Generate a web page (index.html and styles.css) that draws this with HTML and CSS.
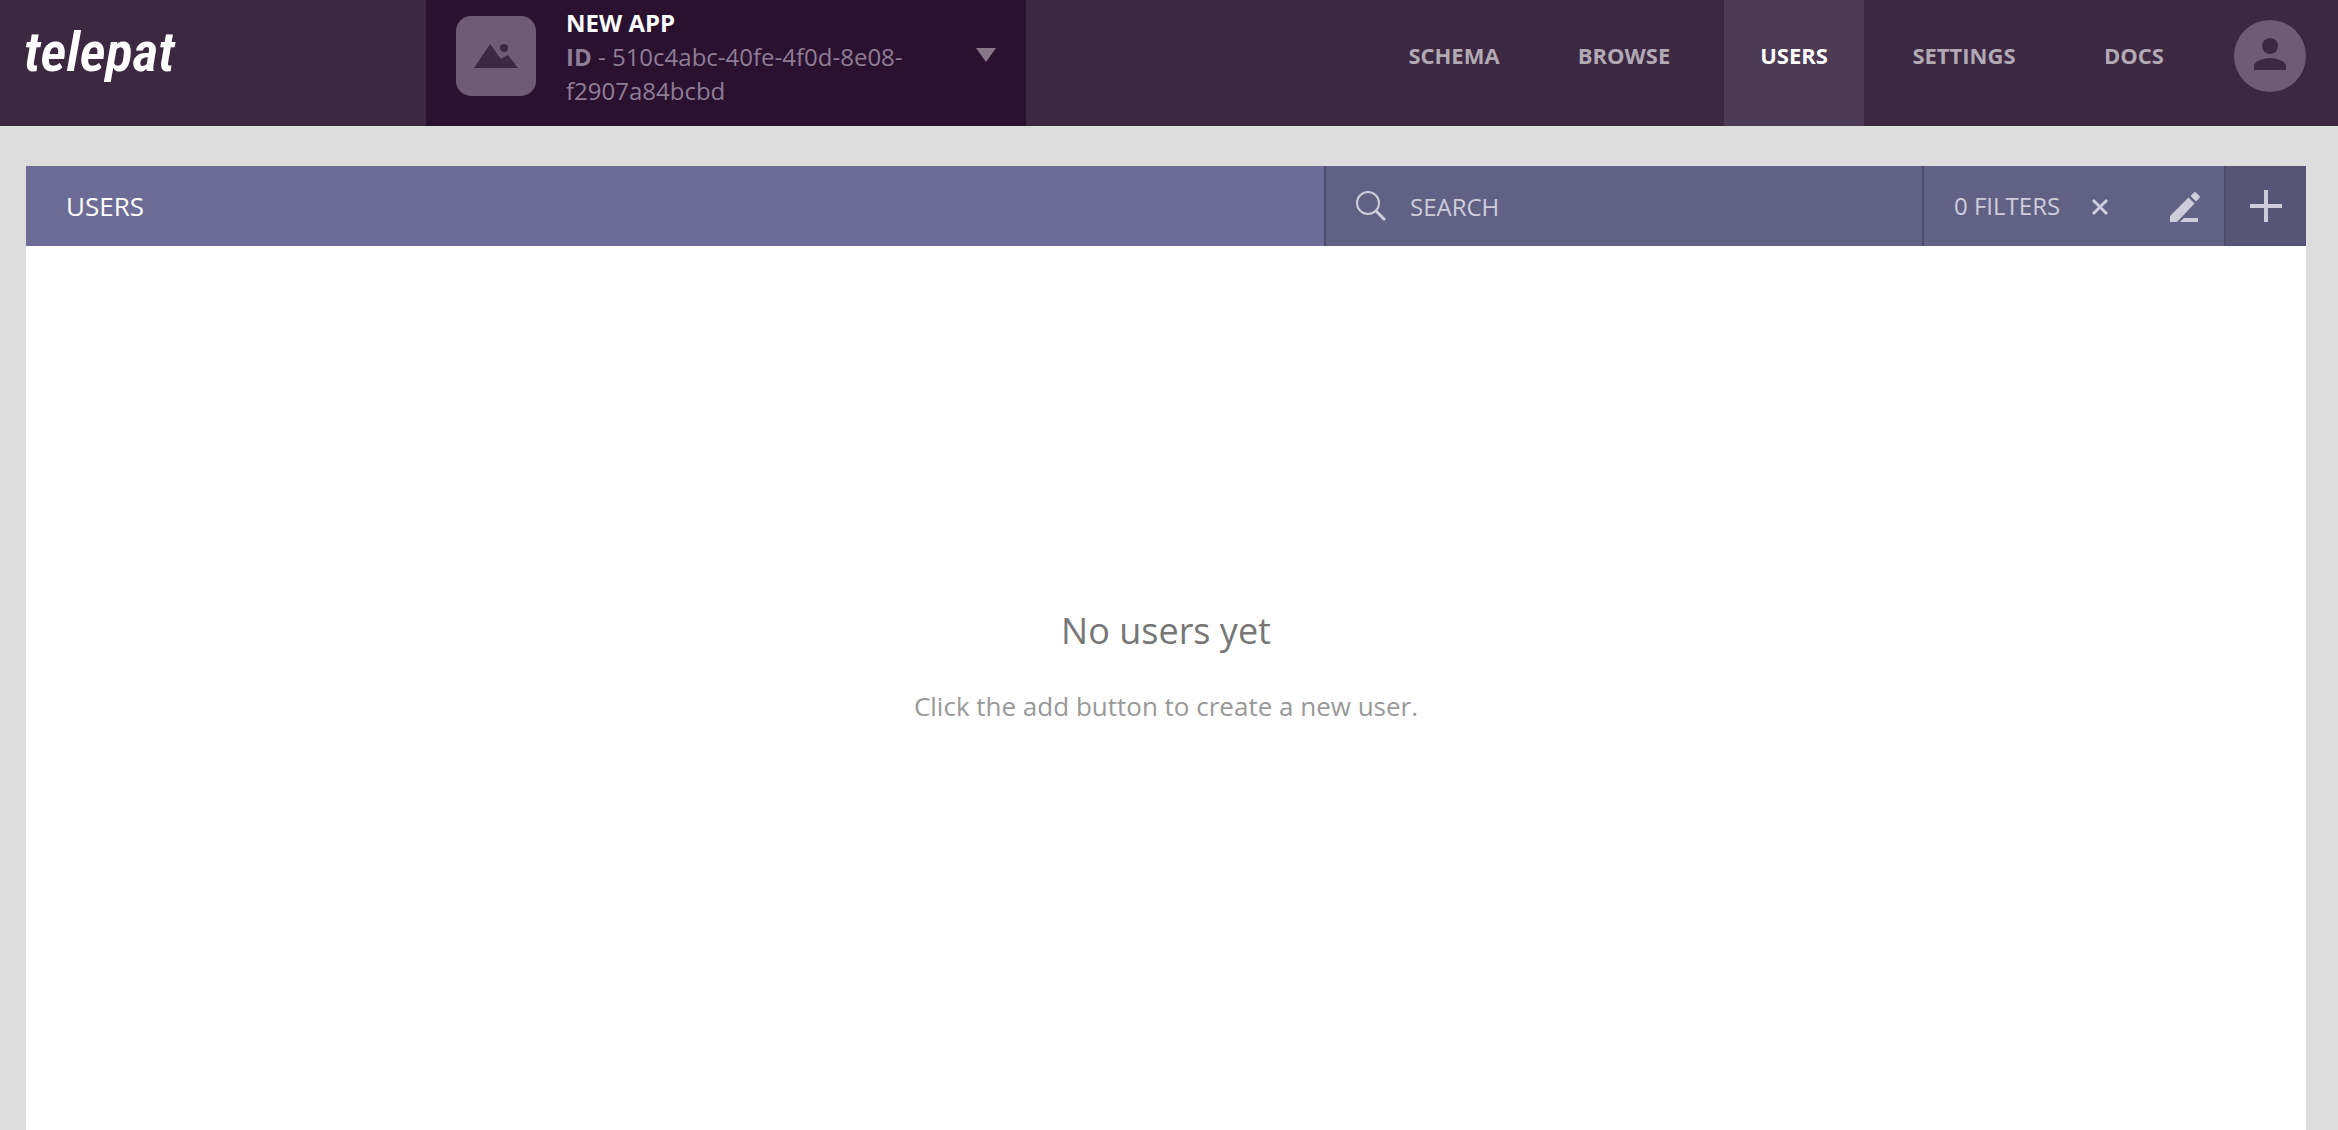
FILE: index.html
```html
<!DOCTYPE html>
<html lang="en">
<head>
<meta charset="utf-8">
<meta name="viewport" content="width=device-width, initial-scale=1">
<title>Telepat - Users</title>
<link rel="stylesheet" href="styles.css">
</head>
<body>
<header class="header">
  <a class="logo" href="#">telepat</a>
  <button class="app-picker" type="button">
    <svg class="app-thumb" viewBox="0 0 80 80" aria-hidden="true">
      <rect width="80" height="80" rx="15" fill="#6f5c74"/>
      <path d="M18 52 L34 28 L45 43 L52 39 L62 52 Z" fill="#3d2842"/>
      <circle cx="48" cy="32" r="4" fill="#3d2842"/>
    </svg>
    <span class="app-info">
      <span class="app-name">NEW APP</span>
      <span class="app-id"><b>ID</b> - 510c4abc-40fe-4f0d-8e08-f2907a84bcbd</span>
    </span>
    <svg class="app-arrow" viewBox="0 0 20 14" aria-hidden="true"><path d="M0 0H20L10 14Z" fill="#877689"/></svg>
  </button>
  <nav class="nav">
    <a class="nav-link" href="#">SCHEMA</a>
    <a class="nav-link" href="#">BROWSE</a>
    <a class="nav-link active" href="#" aria-current="page">USERS</a>
    <a class="nav-link" href="#">SETTINGS</a>
    <a class="nav-link" href="#">DOCS</a>
    <button class="avatar" type="button" aria-label="Account">
      <svg viewBox="0 0 72 72" aria-hidden="true">
        <circle cx="36" cy="36" r="36" fill="#6f5c74"/>
        <circle cx="36" cy="26" r="8" fill="#3d2842"/>
        <path d="M20 50V46C20 41 30 38 36 38S52 41 52 46V50Z" fill="#3d2842"/>
      </svg>
    </button>
  </nav>
</header>
<main class="panel">
  <div class="toolbar">
    <h1 class="title">USERS</h1>
    <label class="search">
      <svg class="icon" viewBox="0 0 30 30" aria-hidden="true" fill="none" stroke="#cfcddb">
        <circle cx="12" cy="12" r="11" stroke-width="2"/>
        <path d="M20 20L29 29" stroke-width="3"/>
      </svg>
      <input class="search-input" type="text" placeholder="SEARCH" aria-label="Search">
    </label>
    <div class="filters">
      <span class="filter-count">0 FILTERS</span>
      <button class="icon-button clear" type="button" aria-label="Clear filters">
        <svg viewBox="0 0 16 16" aria-hidden="true"><path d="M1 1L15 15M15 1L1 15" stroke="#cfcddb" stroke-width="3"/></svg>
      </button>
      <button class="icon-button edit" type="button" aria-label="Edit filters">
        <svg viewBox="0 0 30 30" aria-hidden="true" fill="#cfcddb">
          <path d="M0 30V24L18.500 5.500L24.500 11.500L7 30Z"/>
          <path d="M20.500 4L24 0.500Q25 -0.500 26 0.500L29.500 4Q30.500 5 29.500 6L26 9.500Z"/>
          <path d="M10 30L14 26H28V30Z"/>
        </svg>
      </button>
    </div>
    <button class="add" type="button" aria-label="Add user">
      <svg viewBox="0 0 32 32" aria-hidden="true"><path d="M16 0V32M0 16H32" stroke="#cfcddb" stroke-width="4"/></svg>
    </button>
  </div>
  <section class="empty">
    <h2 class="empty-title">No users yet</h2>
    <p class="empty-text">Click the add button to create a new user.</p>
  </section>
</main>
</body>
</html>
```
FILE: styles.css
```css
* {
  box-sizing: border-box;
}

body {
  margin: 0;
  min-height: 100vh;
  display: flex;
  flex-direction: column;
  background: #ddd;
  font-family: "Open Sans", sans-serif;
  font-size: 24px;
}

svg {
  display: block;
  overflow: visible;
}

button {
  border: 0;
  padding: 0;
  background: none;
  font: inherit;
  cursor: pointer;
}

.header {
  display: flex;
  background: #3d2842;
}

.logo {
  flex: 0 0 402px;
  margin-left: 24px;
  padding-top: 22px;
  color: #fff;
  font: italic 600 56px/60px "Roboto Condensed", "Open Sans Condensed", "Liberation Sans Narrow", "Liberation Sans", sans-serif;
  text-decoration: none;
}

.app-picker {
  flex: 0 0 600px;
  display: flex;
  align-items: flex-start;
  gap: 30px;
  padding: 6px 30px 18px;
  background: #2a1130;
  color: #8f7d95;
  text-align: left;
  line-height: 34px;
}

.app-thumb {
  flex: none;
  width: 80px;
  height: 80px;
  margin-top: 10px;
}

.app-info {
  flex: 1;
}

.app-name {
  display: block;
  color: #fff;
  font-weight: 700;
}

.app-id {
  display: block;
}

.app-arrow {
  width: 20px;
  height: 14px;
  margin-top: 42px;
}

.nav {
  flex: 1;
  display: flex;
  justify-content: flex-end;
  gap: 30px;
  padding-right: 32px;
}

.nav-link {
  width: 140px;
  padding-top: 40px;
  color: #b1a9b3;
  font-size: 22px;
  font-weight: 700;
  line-height: 30px;
  text-align: center;
  text-decoration: none;
}

.nav-link.active {
  background: #4d3a54;
  color: #fff;
}

.avatar {
  width: 72px;
  height: 72px;
  margin-top: 20px;
}

.panel {
  flex: 1;
  display: flex;
  flex-direction: column;
  margin: 40px 32px 0 26px;
  background: #fff;
}

.toolbar {
  display: flex;
  height: 80px;
  background: #6c6c96;
}

.title {
  flex: 1;
  margin: 0;
  padding-left: 40px;
  color: #fff;
  font-size: 26px;
  font-weight: 500;
  line-height: 80px;
}

.search {
  flex: 0 0 598px;
  display: flex;
  align-items: center;
  gap: 24px;
  padding: 0 30px;
  border-left: 2px solid #4f4c6b;
  background: #616186;
}

.icon {
  width: 30px;
  height: 30px;
}

.search-input {
  flex: 1;
  min-width: 0;
  border: 0;
  padding: 0;
  outline: 0;
  background: none;
  color: #cfcddb;
  font: inherit;
  font-weight: 500;
}

.search-input::placeholder {
  color: #cfcddb;
  opacity: 1;
}

.filters {
  flex: 0 0 302px;
  display: flex;
  align-items: center;
  padding: 0 24px 0 30px;
  border-left: 2px solid #4f4c6b;
  background: #616186;
  color: #cfcddb;
  font-weight: 500;
}

.filter-count {
  padding-bottom: 2px;
}

.clear {
  width: 16px;
  height: 16px;
  margin: 2px 0 0 32px;
}

.edit {
  width: 30px;
  height: 30px;
  margin: 2px 0 0 auto;
}

.add {
  flex: 0 0 82px;
  display: grid;
  place-items: center;
  border-left: 2px solid #4f4c6b;
  background: #565577;
}

.add svg {
  width: 32px;
  height: 32px;
}

.empty {
  flex: 1;
  padding: 360px 20px 40px;
  text-align: center;
}

.empty-title {
  margin: 0 0 32px;
  color: #777;
  font-size: 36px;
  font-weight: 400;
  line-height: 50px;
}

.empty-text {
  margin: 0;
  color: #999;
  font-size: 26px;
  line-height: 36px;
}
```
